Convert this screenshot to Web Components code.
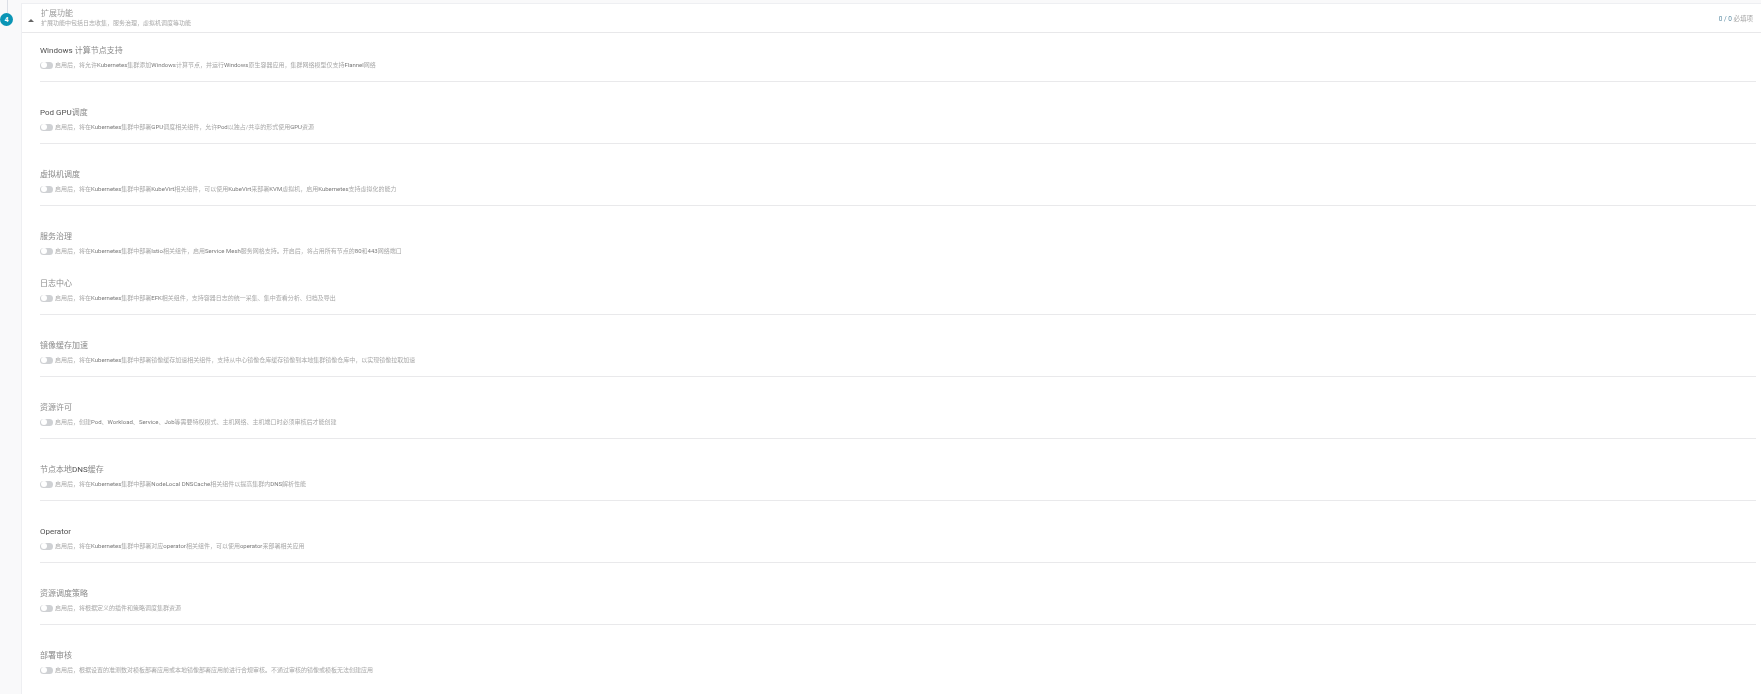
<!DOCTYPE html>
<html lang="zh">
<head>
<meta charset="utf-8">
<title>扩展功能</title>
<style>
  html, body { margin: 0; padding: 0; height: 100%; overflow: hidden; }
  body { background: #f9f9fa; font-family: Roboto, "Noto Sans CJK SC", sans-serif; }
</style>
</head>
<body>
<step-section num="4" heading="扩展功能" sub="扩展功能中包括日志收集，服务治理，虚拟机调度等功能" count="0 / 0" note="必填项">
  <feature-row heading="Windows 计算节点支持" desc="启用后，将允许Kubernetes集群添加Windows计算节点，并运行Windows原生容器应用，集群网络模型仅支持Flannel网络"></feature-row>
  <feature-row heading="Pod GPU调度" desc="启用后，将在Kubernetes集群中部署GPU调度相关组件，允许Pod以独占/共享的形式使用GPU资源"></feature-row>
  <feature-row heading="虚拟机调度" desc="启用后，将在Kubernetes集群中部署KubeVirt相关组件，可以使用KubeVirt来部署KVM虚拟机，启用Kubernetes支持虚拟化的能力"></feature-row>
  <feature-row plain heading="服务治理" desc="启用后，将在Kubernetes集群中部署Istio相关组件，启用Service Mesh服务网格支持。开启后，将占用所有节点的80和443网络端口"></feature-row>
  <feature-row heading="日志中心" desc="启用后，将在Kubernetes集群中部署EFK相关组件，支持容器日志的统一采集、集中查看分析、归档及导出"></feature-row>
  <feature-row heading="镜像缓存加速" desc="启用后，将在Kubernetes集群中部署镜像缓存加速相关组件，支持从中心镜像仓库缓存镜像到本地集群镜像仓库中，以实现镜像拉取加速"></feature-row>
  <feature-row heading="资源许可" desc="启用后，创建Pod、Workload、Service、Job等需要特权模式、主机网络、主机端口时必须审核后才能创建"></feature-row>
  <feature-row heading="节点本地DNS缓存" desc="启用后，将在Kubernetes集群中部署NodeLocal DNSCache相关组件以提高集群内DNS解析性能"></feature-row>
  <feature-row heading="Operator" desc="启用后，将在Kubernetes集群中部署对应operator相关组件，可以使用operator来部署相关应用"></feature-row>
  <feature-row heading="资源调度策略" desc="启用后，将根据定义的插件和策略调度集群资源"></feature-row>
  <feature-row last heading="部署审核" desc="启用后，根据设置的准测数对模板部署应用或本地镜像部署应用前进行合规审核。不通过审核的镜像或模板无法创建应用"></feature-row>
</step-section>

<script>
// latin runs read darker than the CJK ones in this screen
const tintLatin = (text) => text.replace(/[A-Za-z0-9][A-Za-z0-9 ]*/g, '<i>$&</i>');

class StepSection extends HTMLElement {
    constructor() {
        super();
        this.attachShadow({ mode: 'open' });
    }

    connectedCallback() {
        this.shadowRoot.innerHTML = `
            <style>
                * { box-sizing: border-box; }
                :host {
                    display: grid;
                    grid-template-columns: 21px 1fr;
                    font-family: Roboto, "Noto Sans CJK SC", sans-serif;
                }
                .rail::before {
                    content: "";
                    display: block;
                    width: 1px;
                    height: 13px;
                    margin-left: 7px;
                    background: #dcdfe6;
                }
                .dot {
                    display: flex;
                    justify-content: center;
                    align-items: center;
                    width: 13px;
                    height: 13px;
                    border-radius: 50%;
                    background: #0b95b5;
                    color: #fff;
                    font-size: 7px;
                    font-weight: 700;
                }
                .panel {
                    margin-top: 3px;
                    background: #fff;
                    border-top: 1px solid #eeeff2;
                    border-left: 1px solid #eeeff2;
                }
                header {
                    display: flex;
                    align-items: center;
                    height: 29px;
                    padding-right: 8px;
                    border-bottom: 1px solid #e8e8ea;
                }
                .caret {
                    width: 0;
                    height: 0;
                    margin: 5px 7px 0 6px;
                    border: 3px solid transparent;
                    border-top: 0;
                    border-bottom: 3px solid #666;
                }
                .title { flex: 1; margin-top: -2px; filter: blur(.3px); }
                h3 { margin: 0; font-size: 8px; line-height: 11px; font-weight: 400; color: #999; }
                p { margin: 0; font-size: 6px; line-height: 8px; color: #aaa; }
                .count { font-size: 6.5px; color: #5f8ea5; filter: blur(.3px); }
                .count span { color: #a5a5a5; }
                .rows { padding: 12px 0 0 18px; }
            </style>
            <div class="rail"><div class="dot">${this.getAttribute('num')}</div></div>
            <div class="panel">
                <header>
                    <div class="caret"></div>
                    <div class="title">
                        <h3>${this.getAttribute('heading')}</h3>
                        <p>${this.getAttribute('sub')}</p>
                    </div>
                    <div class="count">${this.getAttribute('count')} <span>${this.getAttribute('note')}</span></div>
                </header>
                <div class="rows"><slot></slot></div>
            </div>
        `;
    }
}

class FeatureRow extends HTMLElement {
    constructor() {
        super();
        this.attachShadow({ mode: 'open' });
    }

    connectedCallback() {
        this.shadowRoot.innerHTML = `
            <style>
                :host {
                    display: block;
                    box-sizing: border-box;
                    height: 37px;
                    margin: 0 5px 25px 0;
                    border-bottom: 1px solid #e9e9eb;
                }
                :host([plain]) { height: 22px; border-bottom: 0; }
                :host([last]) { border-bottom: 0; }
                i { font-style: normal; }
                h4 {
                    margin: 0;
                    font-size: 8px;
                    line-height: 12px;
                    font-weight: 400;
                    color: #8a8a8a;
                    filter: blur(.3px);
                }
                h4 i { color: #505050; }
                .line {
                    display: flex;
                    align-items: center;
                    gap: 2px;
                    margin-top: 4px;
                    font-size: 6px;
                    line-height: 8px;
                    color: #a8a8a8;
                }
                .line i { color: #7a7a7a; }
                .line span { filter: blur(.3px); }
            </style>
            <h4>${tintLatin(this.getAttribute('heading'))}</h4>
            <div class="line">
                <toggle-switch></toggle-switch>
                <span>${tintLatin(this.getAttribute('desc'))}</span>
            </div>
        `;
    }
}

class ToggleSwitch extends HTMLElement {
    constructor() {
        super();
        this.attachShadow({ mode: 'open' });
    }

    connectedCallback() {
        this.shadowRoot.innerHTML = `
            <style>
                :host {
                    display: block;
                    flex: none;
                    width: 13px;
                    height: 7px;
                    border-radius: 4px;
                    background: #cfd1d4;
                }
                div {
                    width: 6px;
                    height: 6px;
                    margin: .5px;
                    border-radius: 50%;
                    background: #fff;
                }
            </style>
            <div></div>
        `;
    }
}

customElements.define('toggle-switch', ToggleSwitch);
customElements.define('feature-row', FeatureRow);
customElements.define('step-section', StepSection);
</script>
</body>
</html>
